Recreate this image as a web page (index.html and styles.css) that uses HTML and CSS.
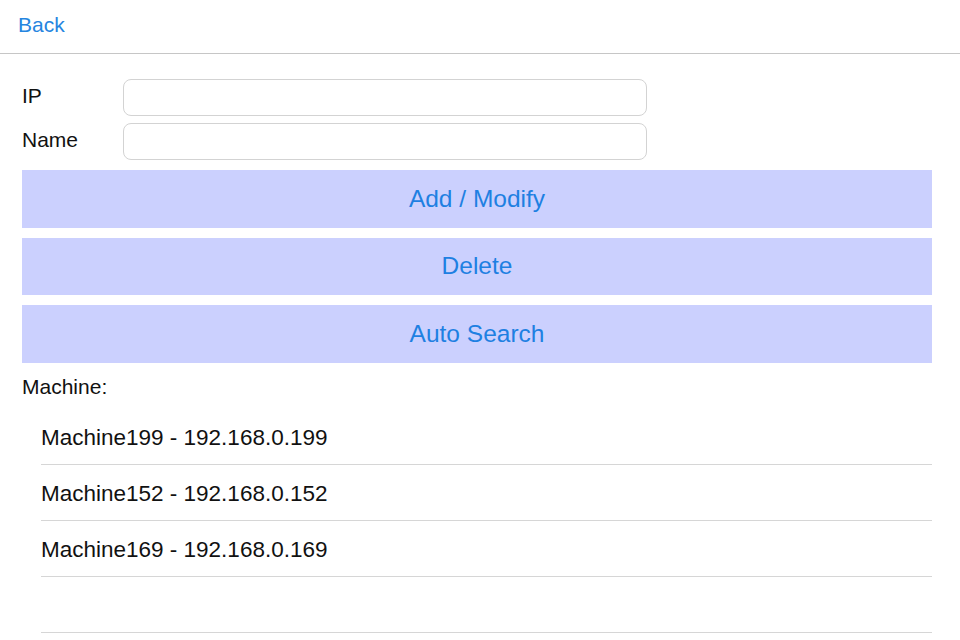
FILE: index.html
```html
<!DOCTYPE html>
<html lang="en">
<head>
<meta charset="utf-8">
<title>Machines</title>
<link rel="stylesheet" href="styles.css">
</head>
<body>
<header class="topbar">
  <a class="back" href="#">Back</a>
</header>
<main class="content">
  <div class="form">
    <label class="label" for="ip">IP</label>
    <input class="field" id="ip" type="text">
    <label class="label" for="name">Name</label>
    <input class="field" id="name" type="text">
  </div>
  <div class="actions">
    <button class="btn" type="button">Add / Modify</button>
    <button class="btn" type="button">Delete</button>
    <button class="btn" type="button">Auto Search</button>
  </div>
  <div class="section-label">Machine:</div>
  <ul class="list">
    <li class="row">Machine199 - 192.168.0.199</li>
    <li class="row">Machine152 - 192.168.0.152</li>
    <li class="row">Machine169 - 192.168.0.169</li>
    <li class="row"></li>
  </ul>
</main>
</body>
</html>
```
FILE: styles.css
```css
html, body {
  margin: 0;
  padding: 0;
  background: #ffffff;
  font-family: "Liberation Sans", Arial, sans-serif;
  color: #111111;
}

.topbar {
  height: 53px;
  border-bottom: 1px solid #c6c6c6;
  display: flex;
  align-items: center;
  padding-left: 18px;
}

.back {
  font-size: 21px;
  color: #2585e0;
  text-decoration: none;
  margin-top: -3px;
}

.content {
  padding: 25px 28px 0 22px;
}

.form {
  display: grid;
  grid-template-columns: 101px 524px;
  grid-auto-rows: 37px;
  row-gap: 7px;
  align-items: center;
}

.label {
  font-size: 21px;
  color: #111111;
  margin-bottom: 4px;
}

.field {
  box-sizing: border-box;
  height: 37px;
  width: 524px;
  border: 1px solid #d3d3d3;
  border-radius: 8px;
  background: #ffffff;
  margin: 0;
  padding: 0 8px;
  font-family: inherit;
  font-size: 18px;
  outline: none;
}

.actions {
  display: flex;
  flex-direction: column;
  gap: 10px;
  margin-top: 10px;
}

.btn {
  height: 57.5px;
  border: none;
  background: #cbd0fe;
  color: #1e80e2;
  font-family: inherit;
  font-size: 24.5px;
  padding: 0;
  margin: 0;
}

.section-label {
  height: 46px;
  line-height: 47px;
  font-size: 21px;
  color: #111111;
}

.list {
  list-style: none;
  margin: 0 0 0 19px;
  padding: 0;
}

.row {
  height: 55px;
  line-height: 57px;
  border-bottom: 1px solid #d6d6d6;
  font-size: 22.5px;
  color: #111111;
}
```
